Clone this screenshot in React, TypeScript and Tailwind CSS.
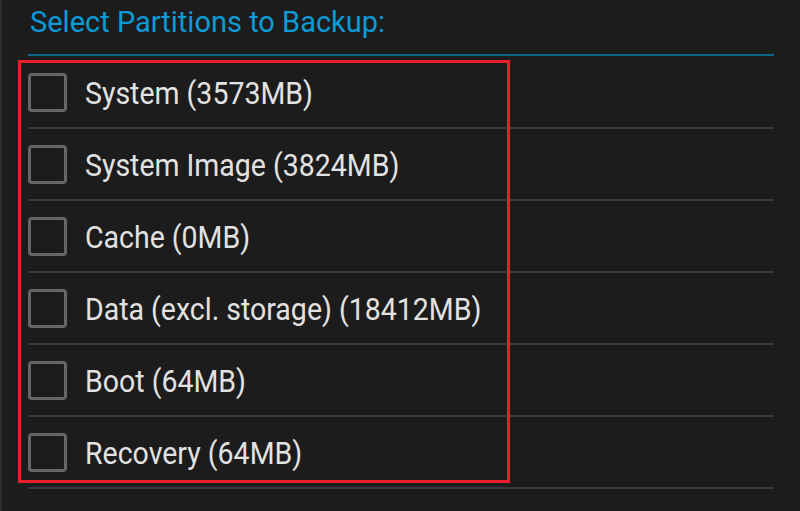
const partitions = [
  "System (3573MB)",
  "System Image (3824MB)",
  "Cache (0MB)",
  "Data (excl. storage) (18412MB)",
  "Boot (64MB)",
  "Recovery (64MB)",
];

function PartitionRow({ label }: { label: string }) {
  return (
    <div className="flex flex-col">
      <div className="flex h-[70px] items-center">
        <div className="h-[39px] w-[39px] shrink-0 rounded-[4px] border-[3px] border-[#666666]" />
        <span className="ml-[18px] translate-y-[2px] scale-y-[1.08] text-[28.5px] leading-none text-[#e2e2e2]">
          {label}
        </span>
      </div>
      <div className="h-[2px] bg-[#3a3a3a]" />
    </div>
  );
}

export default function App() {
  return (
    <div
      className="relative flex h-[511px] w-[800px] overflow-hidden bg-[#1c1c1c]"
      style={{ fontFamily: "Roboto, 'Liberation Sans', sans-serif" }}
    >
      <div className="w-[2px] shrink-0 bg-[#2e2e2e]" />
      <div className="ml-[26px] flex w-[746px] flex-col">
        <div className="flex h-[54px] items-start pl-[2px] pt-[8px]">
          <h1 className="scale-y-[1.04] text-[29px] leading-none text-[#0b9bd7]">
            Select Partitions to Backup:
          </h1>
        </div>
        <div className="h-[2px] bg-[#0e6489]" />
        <div className="h-[1px]" />
        {partitions.map((p) => (
          <PartitionRow key={p} label={p} />
        ))}
      </div>
      {/* highlight annotation */}
      <div className="pointer-events-none absolute left-[18px] top-[60px] h-[423px] w-[492px] border-[3px] border-[#e8202a]" />
    </div>
  );
}
